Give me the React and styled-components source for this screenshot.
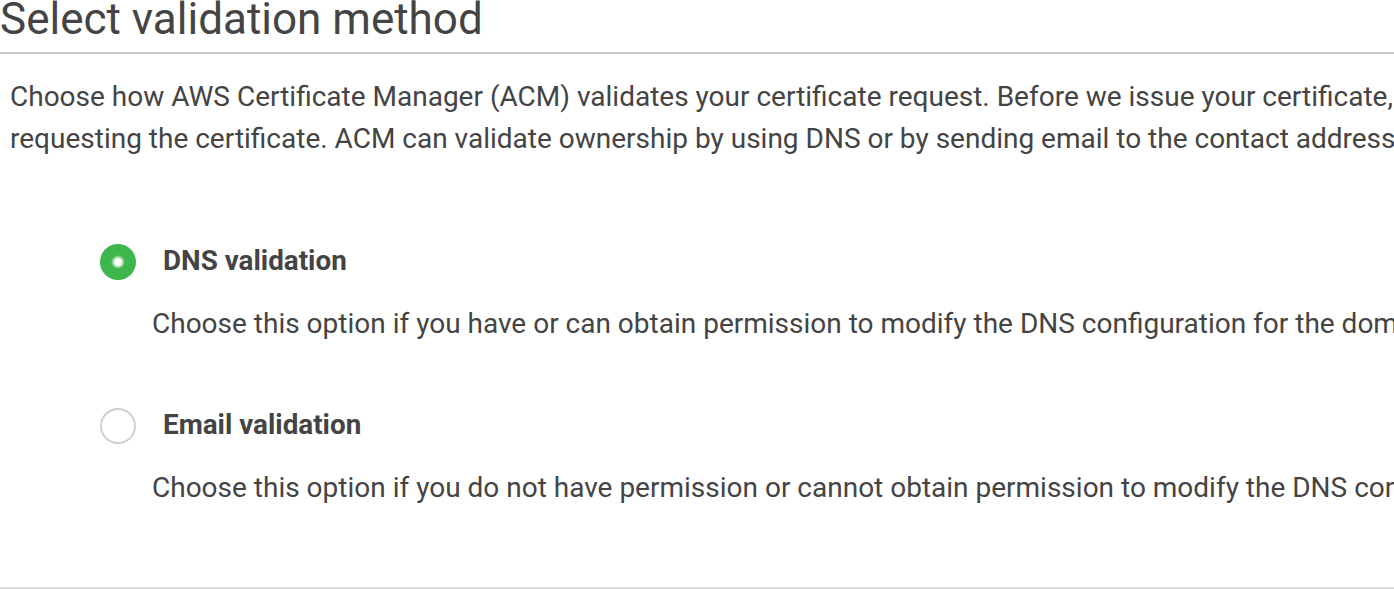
import React from "react";
import styled, { createGlobalStyle } from "styled-components";

const GlobalStyle = createGlobalStyle`
  body {
    margin: 0;
    overflow: hidden;
    background: #fff;
    font-family: Roboto, "Liberation Sans", sans-serif;
    color: #444;
  }
`

const Page = styled.div`
  width: 1394px;
  overflow: hidden;
`

const Title = styled.h1`
  margin: -3px 0 0 0;
  font-size: 44px;
  line-height: 44px;
  font-weight: 400;
  color: #444;
  padding-bottom: 11px;
  border-bottom: 2px solid #ccc;
  white-space: nowrap;
`

const Intro = styled.p`
  margin: 22px 0 0 10px;
  font-size: 28px;
  line-height: 42px;
  white-space: nowrap;
`

const OptionList = styled.div`
  display: flex;
  flex-direction: column;
  gap: 60px;
  padding: 81px 0 78px 100px;
  border-bottom: 2px solid #ddd;
`

const Option = styled.div`
  display: flex;
  flex-direction: column;
  gap: 20px;
`

const OptionHead = styled.label`
  display: flex;
  align-items: center;
  gap: 27px;
  height: 42px;
  cursor: pointer;
`

const Radio = styled.span`
  width: 36px;
  height: 36px;
  box-sizing: border-box;
  border-radius: 50%;
  flex-shrink: 0;
  border: ${p => (p.$checked ? "none" : "2px solid #cdd0d4")};
  background: ${p =>
    p.$checked
      ? "radial-gradient(circle, #fff 0, #fff 3px, #3db64c 7px, #3db64c 100%)"
      : "#fff"};
`

const OptionLabel = styled.span`
  font-size: 27.8px;
  font-weight: 700;
  padding-bottom: 4px;
  white-space: nowrap;
`

const Description = styled.p`
  margin: 0;
  padding-left: 52px;
  font-size: 28px;
  line-height: 42px;
  white-space: nowrap;
`

const options = [
  {
    id: "dns",
    label: "DNS validation",
    checked: true,
    text: "Choose this option if you have or can obtain permission to modify the DNS configuration for the domains in your certificate request.",
  },
  {
    id: "email",
    label: "Email validation",
    checked: false,
    text: "Choose this option if you do not have permission or cannot obtain permission to modify the DNS configuration for the domains in your certificate request.",
  },
]

const App = () => {
  return (
    <>
      <GlobalStyle />
      <Page>
        <Title>Select validation method</Title>
        <Intro>
          Choose how AWS Certificate Manager (ACM) validates your certificate request. Before we issue your certificate, ACM must validate that you own or control all of the domains that you are
          <br />
          requesting the certificate. ACM can validate ownership by using DNS or by sending email to the contact addresses of the domain.
        </Intro>
        <OptionList>
          {options.map(o => (
            <Option key={o.id}>
              <OptionHead>
                <Radio $checked={o.checked} />
                <OptionLabel>{o.label}</OptionLabel>
              </OptionHead>
              <Description>{o.text}</Description>
            </Option>
          ))}
        </OptionList>
      </Page>
    </>
  )
}

export default App;
